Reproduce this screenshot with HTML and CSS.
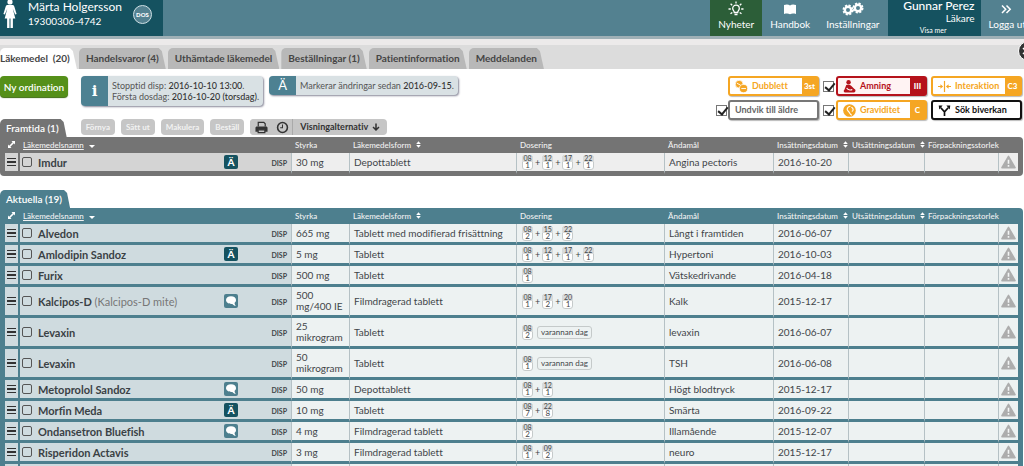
FILE: index.html
```html
<!DOCTYPE html>
<html lang="sv">
<head>
<meta charset="utf-8">
<title>Läkemedel</title>
<link rel="stylesheet" href="styles.css">
</head>
<body>
<svg class="defs" aria-hidden="true">
  <symbol id="warn" viewBox="0 0 16 14"><path d="M8 1 15 13H1z" fill="#adadad" stroke="#adadad" stroke-width="1.6" stroke-linejoin="round"/><path d="M8 4.6v4.2M8 10.2v1.8" stroke="#f4f6f6" stroke-width="1.7"/></symbol>
  <symbol id="chat" viewBox="0 0 14 14"><path d="M7 2.2c3 0 5 1.7 5 3.9 0 1.3-.6 2.2-1.5 2.9.1 1 .6 2 1.2 2.900-1.400-.2-2.500-.9-3.300-1.900C4.700 10.300 2 8.700 2 6.100c0-2.200 2-3.900 5-3.900z" fill="#fff"/></symbol>
  <symbol id="expand" viewBox="0 0 8 8"><path d="M4 0h4v4L6.700 2.700 2.700 6.700 4 8H0V4l1.300 1.300 4-4z" fill="#fff"/></symbol>
  <symbol id="sort" viewBox="0 0 6 8"><path d="M3 0l2.800 3.300H.2zM3 8L.2 4.700h5.600z" fill="#fff"/></symbol>
</svg>
<header class="top">
  <div class="patient">
    <svg class="woman" viewBox="0 0 14 28"><circle cx="7" cy="2" r="2.600" fill="#fff"/><path d="M4.500 5h5c1 0 1.500.6 1.800 1.600L13.600 14l-1.500.6-2.400-6 2.600 9.900H9.900V28H7.500v-9.500h-1V28H4.100v-9.500H1.700l2.600-9.900-2.400 6-1.500-.6 2.300-7.400C3 5.600 3.500 5 4.500 5z" fill="#fff"/></svg>
    <div class="who"><div class="name">Märta Holgersson</div><div>19300306-4742</div></div>
    <span class="dos">DOS</span>
  </div>
  <nav class="menu">
    <a href="#" class="item news"><svg viewBox="0 0 16 16"><g fill="none" stroke="#fff" stroke-width="1.300"><path d="M6.300 11.500c0-1.500-1.600-2.200-1.600-4a3.300 3.300 0 0 1 6.600 0c0 1.800-1.600 2.500-1.600 4zM6.500 13.500h3M8 .5v2M2.600 2.800l1.600 1.500M13.400 2.800l-1.600 1.500M.5 8h2.300M15.500 8h-2.300M2.500 12.800l1.800-1.400M13.500 12.800l-1.800-1.400"/></g></svg>Nyheter</a>
    <a href="#" class="item"><svg viewBox="0 0 16 16"><path d="M2 4c2.500-1 4.500-.7 6 .4 1.500-1.100 3.500-1.400 6-.4v9c-2.500-.8-4.500-.6-6 .2-1.500-.8-3.500-1-6-.2z" fill="#fff"/></svg>Handbok</a>
    <a href="#" class="item"><svg class="gears" viewBox="0 0 22 16"><g fill="none" stroke="#fff"><circle cx="6" cy="9" r="3.200" stroke-width="2.400"/><circle cx="6" cy="9" r="4.700" stroke-width="1.600" stroke-dasharray="2.200 1.490"/><circle cx="16" cy="7" r="3.200" stroke-width="2.400"/><circle cx="16" cy="7" r="4.700" stroke-width="1.600" stroke-dasharray="2.200 1.490"/></g></svg>Inställningar</a>
    <div class="user"><b>Gunnar Perez</b><span>Läkare</span><a href="#">Visa mer</a></div>
    <a href="#" class="item"><svg viewBox="0 0 16 16"><path d="M3 4.500l3.700 3.700L3 12M7.500 4.500l3.700 3.700L7.500 12" fill="none" stroke="#fff" stroke-width="1.500"/></svg>Logga ut</a>
  </nav>
</header>
<div class="tabbar">
  <nav class="tabs">
    <a href="#" class="tab on">Läkemedel &nbsp;(20)</a><a href="#" class="tab">Handelsvaror (4)</a><a href="#" class="tab">Uthämtade läkemedel</a><a href="#" class="tab">Beställningar (1)</a><a href="#" class="tab">Patientinformation</a><a href="#" class="tab">Meddelanden</a>
  </nav>
  <button class="side" aria-label="Visa panel"><svg viewBox="0 0 8 8"><path d="M1 1l3 3-3 3" fill="none" stroke="#fff" stroke-width="1.500"/></svg></button>
</div>
<main>
  <div class="actions">
    <button class="new">Ny ordination</button>
    <div class="note"><span class="mark info">i</span><p>Stopptid disp: <b>2016-10-10 13:00</b>.<br>Första dosdag: <b>2016-10-20 (torsdag)</b>.</p></div>
    <div class="note"><span class="mark">Ä</span><p>Markerar ändringar sedan <b>2016-09-15</b>.</p></div>
    <div class="alerts">
      <span></span>
      <button class="alert"><svg viewBox="0 0 14 14"><g fill="#f5a623" stroke="#fff" stroke-width=".8"><circle cx="4.500" cy="4.500" r="4.200"/><circle cx="9.200" cy="9.200" r="4.400"/></g><path d="M2 3.500l4 2M6.800 9.200h5" stroke="#fff"/></svg><span>Dubblett</span><b>3st</b></button>
      <input type="checkbox" checked aria-label="Amning">
      <button class="alert red"><svg viewBox="0 0 14 14"><circle cx="6" cy="2.500" r="2.400" fill="#b5121b"/><path d="M3.500 5.500C5 5 7.500 5 8.500 6L12 9.500c2 .5 2 3.500 0 4H2c-1.500-.3-1.500-2.500-.5-3z" fill="#b5121b"/><path d="M4 8.500c1 2 4 3 6 1.800" fill="none" stroke="#fff" stroke-width="1.200"/></svg><span>Amning</span><b>III</b></button>
      <button class="alert"><svg viewBox="0 0 14 14"><path d="M7 1v12" stroke="#f5a623" stroke-width="1.300"/><path d="M0 7h4M14 7h-4" stroke="#f5a623" stroke-width="1.300"/><path d="M2.600 4.500L5.500 7 2.600 9.500zM11.400 4.500L8.500 7l2.900 2.500z" fill="#f5a623"/></svg><span>Interaktion</span><b>C3</b></button>
      <input type="checkbox" checked aria-label="Undvik till äldre">
      <button class="alert grey"><span>Undvik till äldre</span></button>
      <input type="checkbox" checked aria-label="Graviditet">
      <button class="alert"><svg viewBox="0 0 14 14"><circle cx="7" cy="7" r="6.800" fill="#f5a623"/><path d="M8 2.500C4.500 3 3.500 6 5.500 7.500S7 11 9.500 12M9 3.500c2.500 1 2.500 3.500.5 4.500" fill="none" stroke="#fff" stroke-width="1.200"/></svg><span>Graviditet</span><b>C</b></button>
      <button class="alert black"><svg viewBox="0 0 14 14"><path d="M7 13V8.500L3 4M7 8.500L11 4" fill="none" stroke="#111" stroke-width="1.800"/><path d="M.8 1.500H5L1.300 6zM13.200 1.500H9L12.700 6z" fill="#111"/></svg><span>Sök biverkan</span></button>
    </div>
  </div>
  <section class="future">
    <div class="bar">
      <h2>Framtida (1)</h2>
      <div class="tools">
        <button disabled>Förnya</button><button disabled>Sätt ut</button><button disabled>Makulera</button><button disabled>Beställ</button>
        <div class="view">
          <button aria-label="Skriv ut"><svg viewBox="0 0 14 14"><path d="M3.500 6V1.500h6l1.500 1.500V6" fill="none" stroke="#333" stroke-width="1.300"/><path d="M1.500 6h11l1 1v4.500h-2.700V9.500H3.200v2H.5V7z" fill="#333"/><path d="M3.400 9.500h7.200v3H3.400z" fill="none" stroke="#333" stroke-width="1.300"/></svg></button>
          <button aria-label="Historik"><svg viewBox="0 0 14 14"><circle cx="7" cy="7" r="5.300" fill="none" stroke="#333" stroke-width="1.700"/><path d="M7 3.800V7.300H4.500" fill="none" stroke="#333" stroke-width="1.100"/></svg></button>
          <button class="opt">Visningalternativ<svg viewBox="0 0 10 10"><path d="M5 .5v8M1.300 5L5 8.700 8.700 5" fill="none" stroke="#333" stroke-width="1.900"/></svg></button>
        </div>
      </div>
    </div>
    <div class="frame"><table>
      <colgroup><col class="c0"><col class="c1"><col class="c2"><col class="c3"><col class="c4"><col class="c5"><col class="c6"><col class="c7"><col class="c8"><col class="c9"></colgroup>
      <thead><tr><th><svg class="ex"><use href="#expand"/></svg></th><th><a href="#">Läkemedelsnamn</a><i class="down"></i></th><th>Styrka</th><th>Läkemedelsform<svg class="so"><use href="#sort"/></svg></th><th>Dosering</th><th>Ändamål</th><th>Insättningsdatum<svg class="so"><use href="#sort"/></svg></th><th>Utsättningsdatum<svg class="so"><use href="#sort"/></svg></th><th>Förpackningsstorlek</th><th></th></tr></thead>
      <tbody>
      <tr><td><i class="burger"></i></td><td><div class="drug"><input type="checkbox" aria-label="Imdur"><b>Imdur</b><span class="tag">Ä</span><small>DISP</small></div></td><td>30 mg</td><td>Depottablett</td><td><div class="dose"><span><i>08</i>1</span>+<span><i>12</i>1</span>+<span><i>17</i>1</span>+<span><i>22</i>1</span></div></td><td>Angina pectoris</td><td>2016-10-20</td><td></td><td></td><td><svg class="wa"><use href="#warn"/></svg></td></tr>
      </tbody>
    </table></div>
  </section>
  <section class="current">
    <div class="bar"><h2>Aktuella (19)</h2></div>
    <div class="frame"><table>
      <colgroup><col class="c0"><col class="c1"><col class="c2"><col class="c3"><col class="c4"><col class="c5"><col class="c6"><col class="c7"><col class="c8"><col class="c9"></colgroup>
      <thead><tr><th><svg class="ex"><use href="#expand"/></svg></th><th><a href="#">Läkemedelsnamn</a><i class="down"></i></th><th>Styrka</th><th>Läkemedelsform<svg class="so"><use href="#sort"/></svg></th><th>Dosering</th><th>Ändamål</th><th>Insättningsdatum<svg class="so"><use href="#sort"/></svg></th><th>Utsättningsdatum<svg class="so"><use href="#sort"/></svg></th><th>Förpackningsstorlek</th><th></th></tr></thead>
      <tbody>
      <tr><td><i class="burger"></i></td><td><div class="drug"><input type="checkbox" aria-label="Alvedon"><b>Alvedon</b><small>DISP</small></div></td><td>665 mg</td><td>Tablett med modifierad frisättning</td><td><div class="dose"><span><i>08</i>2</span>+<span><i>15</i>2</span>+<span><i>22</i>2</span></div></td><td>Långt i framtiden</td><td>2016-06-07</td><td></td><td></td><td><svg class="wa"><use href="#warn"/></svg></td></tr>
      <tr><td><i class="burger"></i></td><td><div class="drug"><input type="checkbox" aria-label="Amlodipin Sandoz"><b>Amlodipin Sandoz</b><span class="tag">Ä</span><small>DISP</small></div></td><td>5 mg</td><td>Tablett</td><td><div class="dose"><span><i>08</i>1</span>+<span><i>12</i>1</span>+<span><i>17</i>1</span>+<span><i>22</i>1</span></div></td><td>Hypertoni</td><td>2016-10-03</td><td></td><td></td><td><svg class="wa"><use href="#warn"/></svg></td></tr>
      <tr><td><i class="burger"></i></td><td><div class="drug"><input type="checkbox" aria-label="Furix"><b>Furix</b><small>DISP</small></div></td><td>500 mg</td><td>Tablett</td><td><div class="dose"><span><i>08</i>1</span></div></td><td>Vätskedrivande</td><td>2016-04-18</td><td></td><td></td><td><svg class="wa"><use href="#warn"/></svg></td></tr>
      <tr><td><i class="burger"></i></td><td><div class="drug"><input type="checkbox" aria-label="Kalcipos-D"><b>Kalcipos-D <em>(Kalcipos-D mite)</em></b><span class="tag talk"><svg><use href="#chat"/></svg></span><small>DISP</small></div></td><td>500 mg/400 IE</td><td>Filmdragerad tablett</td><td><div class="dose"><span><i>08</i>1</span>+<span><i>17</i>2</span>+<span><i>20</i>1</span></div></td><td>Kalk</td><td>2015-12-17</td><td></td><td></td><td><svg class="wa"><use href="#warn"/></svg></td></tr>
      <tr><td><i class="burger"></i></td><td><div class="drug"><input type="checkbox" aria-label="Levaxin"><b>Levaxin</b><small>DISP</small></div></td><td>25 mikrogram</td><td>Tablett</td><td><div class="dose"><span><i>08</i>2</span><q>varannan dag</q></div></td><td>levaxin</td><td>2016-06-07</td><td></td><td></td><td><svg class="wa"><use href="#warn"/></svg></td></tr>
      <tr><td><i class="burger"></i></td><td><div class="drug"><input type="checkbox" aria-label="Levaxin"><b>Levaxin</b><small>DISP</small></div></td><td>50 mikrogram</td><td>Tablett</td><td><div class="dose"><span><i>08</i>1</span><q>varannan dag</q></div></td><td>TSH</td><td>2016-06-08</td><td></td><td></td><td><svg class="wa"><use href="#warn"/></svg></td></tr>
      <tr><td><i class="burger"></i></td><td><div class="drug"><input type="checkbox" aria-label="Metoprolol Sandoz"><b>Metoprolol Sandoz</b><span class="tag talk"><svg><use href="#chat"/></svg></span><small>DISP</small></div></td><td>50 mg</td><td>Depottablett</td><td><div class="dose"><span><i>08</i>1</span>+<span><i>12</i>1</span></div></td><td>Högt blodtryck</td><td>2015-12-17</td><td></td><td></td><td><svg class="wa"><use href="#warn"/></svg></td></tr>
      <tr><td><i class="burger"></i></td><td><div class="drug"><input type="checkbox" aria-label="Morfin Meda"><b>Morfin Meda</b><span class="tag">Ä</span><small>DISP</small></div></td><td>10 mg</td><td>Tablett</td><td><div class="dose"><span><i>08</i>7</span>+<span><i>22</i>8</span></div></td><td>Smärta</td><td>2016-09-22</td><td></td><td></td><td><svg class="wa"><use href="#warn"/></svg></td></tr>
      <tr><td><i class="burger"></i></td><td><div class="drug"><input type="checkbox" aria-label="Ondansetron Bluefish"><b>Ondansetron Bluefish</b><span class="tag talk"><svg><use href="#chat"/></svg></span><small>DISP</small></div></td><td>4 mg</td><td>Filmdragerad tablett</td><td><div class="dose"><span><i>08</i>2</span></div></td><td>Illamående</td><td>2015-12-07</td><td></td><td></td><td><svg class="wa"><use href="#warn"/></svg></td></tr>
      <tr><td><i class="burger"></i></td><td><div class="drug"><input type="checkbox" aria-label="Risperidon Actavis"><b>Risperidon Actavis</b><small>DISP</small></div></td><td>3 mg</td><td>Filmdragerad tablett</td><td><div class="dose"><span><i>08</i>1</span>+<span><i>09</i>2</span></div></td><td>neuro</td><td>2015-12-17</td><td></td><td></td><td><svg class="wa"><use href="#warn"/></svg></td></tr>
      <tr><td></td><td></td><td></td><td></td><td></td><td></td><td></td><td></td><td></td><td></td></tr>
      </tbody>
    </table></div>
  </section>
</main>
</body>
</html>
```
FILE: styles.css
```css
* { box-sizing: border-box; }
html { overflow: hidden; }
body { margin: 0; font: 10px/14px Lato, "Liberation Sans", sans-serif; font-variant-ligatures: none; color: #3f4549; background: #fff; overflow: hidden; }
button { font: inherit; margin: 0; padding: 0; border: 0; }
a { color: inherit; text-decoration: none; }
.defs { display: none; }
svg { flex: none; }

.top { display: flex; justify-content: space-between; height: 36px; background: #538190; color: #fff; overflow: hidden; white-space: nowrap; }
.patient { display: flex; gap: 11px; width: 163px; padding-left: 3px; background: #155260; }
.woman { width: 14px; height: 28px; }
.who .name { font-size: 12px; }
.who { line-height: 14px; }
.dos { margin-top: 5px; width: 19px; height: 19px; border: 1px solid #cfe0e4; border-radius: 50%; background: #538190; font-size: 6px; font-weight: 900; line-height: 17px; text-align: center; }
.menu { display: flex; margin-right: -10px; }
.item { display: flex; flex-direction: column; align-items: center; padding: 1px 8px 0; font-size: 10px; line-height: 15px; }
.item svg { width: 16px; height: 16px; }
.item .gears { width: 22px; }
.news { background: #2c5e38; }
.user { display: flex; flex-direction: column; width: 93px; padding-right: 6px; background: #155260; text-align: right; line-height: 13px; }
.user b { font-size: 12px; line-height: 12px; font-weight: 500; }
.user a { font-size: 7px; line-height: 11px; padding-right: 28px; }

.tabbar { position: relative; border-top: 3px solid #9fb0b6; background: linear-gradient(#eceaea 6px, #dcdcdc 6px); padding-top: 9px; }
.tabs { display: flex; gap: 2px; font-weight: 700; color: #454545; line-height: 21px; white-space: nowrap; }
.tab { position: relative; z-index: 0; padding: 0 7px; }
.tab::before { content: ""; position: absolute; z-index: -1; inset: 0; background: #b8b8b8; border-radius: 5px 0 0 0; clip-path: polygon(0 0, calc(100% - 7px) 0, calc(100% - 4px) 3px, 100% 100%, 0 100%); }
.tab.on { padding-left: 0; }
.tab.on::before { background: #fff; }
.side { position: absolute; right: -14px; top: 2px; width: 20px; height: 20px; border: 1px solid #fff; border-radius: 50%; background: #333; }
.side svg { display: block; width: 8px; height: 8px; margin-left: 3px; }

.actions { display: flex; align-items: flex-start; padding: 7px 2px 0 0; white-space: nowrap; }
.new { width: 68px; height: 21px; margin-right: 13px; border-radius: 4px; background: #559019; box-shadow: 0 1px 1px #3a6a0c; color: #fff; font-weight: 600; }
.note { display: flex; margin-right: 6px; border-radius: 4px; background: #d9e1e4; box-shadow: 1px 1px 2px #889; overflow: hidden; font-size: 9px; line-height: 11px; color: #555; }
.note p { margin: 0; padding: 4px 4px 4px 4px; }
.note b { font-weight: 500; color: #333; }
.mark { display: flex; align-items: center; justify-content: center; width: 27px; background: #4d8192; color: #fff; font-size: 13px; }
.mark.info { font: 900 15px "DejaVu Serif", serif; }
.alerts { display: grid; grid-template-columns: 12px 91px 17px 91px 95px; gap: 4px 0; margin-left: auto; align-items: center; }
.alerts > :nth-child(5n) { margin-left: 4px; }
.alerts > :nth-child(5n+3) { margin-left: 4px; }
.alert { display: flex; align-items: center; gap: 4px; height: 20px; padding-left: 5px; border: 2px solid #f5a623; border-radius: 3px; background: #fff; color: #f5a623; font-size: 9px; font-weight: 700; box-shadow: 1px 1px 1px #bbb; }
.alert svg { width: 13px; height: 13px; }
.alert b { align-self: stretch; margin-left: auto; width: 15px; background: #f5a623; color: #fff; font-size: 8px; font-weight: 900; line-height: 16px; }
.alert.red { border-color: #b5121b; color: #b5121b; background: #fff3f3; }
.red b { background: #b5121b; }
.alert.grey { border-color: #777; color: #666; }
.alert.black { border-color: #111; color: #111; }
input { appearance: none; flex: none; margin: 0; }
.alerts input { width: 11px; height: 11px; border: 1px solid #777; background: #fff; position: relative; }
.alerts input::after { content: ""; position: absolute; left: 3px; top: -1px; width: 4px; height: 8px; border: solid #222; border-width: 0 2px 2px 0; transform: rotate(40deg); }

.future { margin-top: -1px; }
.bar { display: flex; align-items: flex-end; }
h2 { margin: 0; padding: 0 8px 0 6px; font-size: 10px; font-weight: 600; line-height: 18px; color: #fff; background: #747474; border-radius: 5px 6px 0 0; clip-path: polygon(0 0, calc(100% - 6px) 0, calc(100% - 3px) 3px, 100% 100%, 0 100%); }
.current h2 { background: #4d7f8e; }
.tools { display: flex; gap: 6px; margin: 0 0 2px 14px; }
.tools button { border-radius: 4px; background: #c6c6c6; height: 16px; padding: 0 5px; color: #f2f2f2; font-size: 8px; font-weight: 700; line-height: 16px; }
.view { display: flex; background: #c6c6c6; border-radius: 4px; }
.view svg { width: 13px; height: 13px; display: block; }
.view button { padding: 0 3px 0 5px; }
.tools .opt { display: flex; align-items: center; gap: 4px; border-left: 1px solid #aaa; border-radius: 0; background: none; color: #333; font-size: 9px; padding: 0 7px; }
.tools .opt svg { width: 8px; height: 8px; }
.frame { margin-right: 1px; padding: 0 5px; background: #747474; border-radius: 0 4px 4px 4px; }
.current .frame { background: #4d7f8e; }
.future .frame { padding-bottom: 2px; }
.current { margin-top: 14px; }
table { width: 100%; table-layout: fixed; border-spacing: 0; }
.c0 { width: 15px; } .c2 { width: 58px; } .c3 { width: 167px; } .c4 { width: 148px; } .c5 { width: 109px; } .c6 { width: 75px; } .c7 { width: 76px; } .c8 { width: 74px; } .c9 { width: 20px; }
th { padding: 0 0 0 4px; height: 16px; color: #f2f2f2; font-size: 8px; line-height: 14px; font-weight: 500; text-align: left; white-space: nowrap; }
th:first-child { padding-left: 3px; }
th:nth-child(2) { padding-left: 3px; }
th a { text-decoration: underline; }
.ex { width: 7px; height: 7px; }
.so { width: 5px; height: 7px; margin-left: 5px; }
.down { display: inline-block; margin-left: 5px; border: 3px solid transparent; border-top-color: #fff; border-bottom: 0; }
td { height: 21px; padding: 0 4px; border-bottom: 3px solid #4d7f8e; border-left: 1px solid #b5c1c5; background: #edf2f2; line-height: 11px; }
td:first-child { padding: 0; border-left: 0; border-right: 2px solid #4d7f8e; background: #cfdbdf; }
td:nth-child(2) { padding: 0 4px 0 2px; border-left: 0; background: #cfdbdf; }
td:nth-child(3) { padding: 3px 0 3px 4px; }
td:last-child { padding: 0 2px; }
.future td { border-bottom-color: #747474; background: #eee; }
.future td:nth-child(-n+2) { background: #d4d4d4; border-right-color: #747474; }
.burger { display: block; width: 9px; height: 8px; margin: auto; background: linear-gradient(#333 1px, transparent 1px 3px, #333 3px 5px, transparent 5px 7px, #333 7px); }
.drug { display: flex; align-items: center; font-size: 11px; }
.drug b { flex: 1; margin-left: 6px; color: #3a4145; }
.drug em { font-style: normal; font-weight: 400; color: #777; }
.drug input { width: 10px; height: 10px; border: 1px solid #555; border-radius: 2px; }
.tag { width: 14px; height: 14px; border-radius: 2px; background: #155260; color: #fff; font-size: 10px; font-weight: 900; line-height: 14px; text-align: center; }
.tag svg { display: block; width: 14px; height: 14px; }
.talk { background: #4d7f8e; }
.drug small { width: 49px; font-size: 7px; font-weight: 700; text-align: right; line-height: 8px; padding-top: 2px; }
.dose { display: flex; align-items: center; gap: 2px; font-size: 9px; padding-left: 1px; }
.dose span { width: 11px; height: 15px; border: 1px solid #c5caca; border-radius: 3px; background: #fff; font-size: 8px; line-height: 7px; text-align: center; }
.dose i { display: block; margin: -1px -1px 0; background: #d8dada; border-radius: 3px 3px 0 0; font-size: 7px; font-style: normal; }
.dose q { quotes: none; margin-left: 2px; padding: 0 3px; border: 1px solid #c5caca; border-radius: 3px; font-size: 8px; }
.wa { display: block; width: 15px; height: 14px; }
```
